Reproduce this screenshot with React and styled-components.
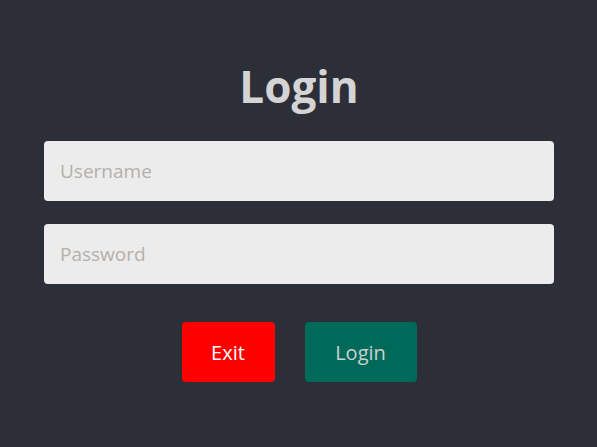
import React from 'react';
import styled, { createGlobalStyle } from 'styled-components';

const GlobalStyle = createGlobalStyle`
  html, body {
    margin: 0;
    padding: 0;
    background: #2d2f38;
  }
  body {
    font-family: "Open Sans", "Noto Sans", sans-serif;
  }
`;

const Page = styled.div`
  width: 597px;
  height: 447px;
  background: #2d2f38;
  display: flex;
  flex-direction: column;
  align-items: center;
  box-sizing: border-box;
  padding: 56px 43px 0 44px;
`;

const Title = styled.h1`
  margin: 0 0 25px;
  font-size: 44px;
  line-height: 60px;
  font-weight: 700;
  color: #d4d4d4;
`;

const Form = styled.form`
  width: 100%;
  display: flex;
  flex-direction: column;
  gap: 23px;
`;

const Input = styled.input`
  width: 100%;
  height: 60px;
  box-sizing: border-box;
  border: none;
  outline: none;
  border-radius: 4px;
  background: #ececec;
  padding: 0 16px;
  font-family: inherit;
  font-size: 19px;
  color: #333;

  &::placeholder {
    color: #b5b0aa;
  }
`;

const Actions = styled.div`
  display: flex;
  justify-content: center;
  gap: 30px;
  margin-top: 15px;
`;

const Button = styled.button`
  height: 60px;
  min-width: ${props => props.$primary ? '112px' : '93px'};
  padding: 0 28px;
  border: none;
  border-radius: 4px;
  background: ${props => props.$primary ? '#006a5a' : '#ff0000'};
  color: ${props => props.$primary ? '#c8d2ce' : '#ffffff'};
  font-family: inherit;
  font-size: 20px;
  cursor: pointer;
`;

const App = () => {
  return (
    <>
      <GlobalStyle />
      <Page>
        <Title>Login</Title>
        <Form onSubmit={e => e.preventDefault()}>
          <Input type="text" placeholder="Username" />
          <Input type="password" placeholder="Password" />
          <Actions>
            <Button type="button">Exit</Button>
            <Button type="submit" $primary>Login</Button>
          </Actions>
        </Form>
      </Page>
    </>
  );
};

export default App;
